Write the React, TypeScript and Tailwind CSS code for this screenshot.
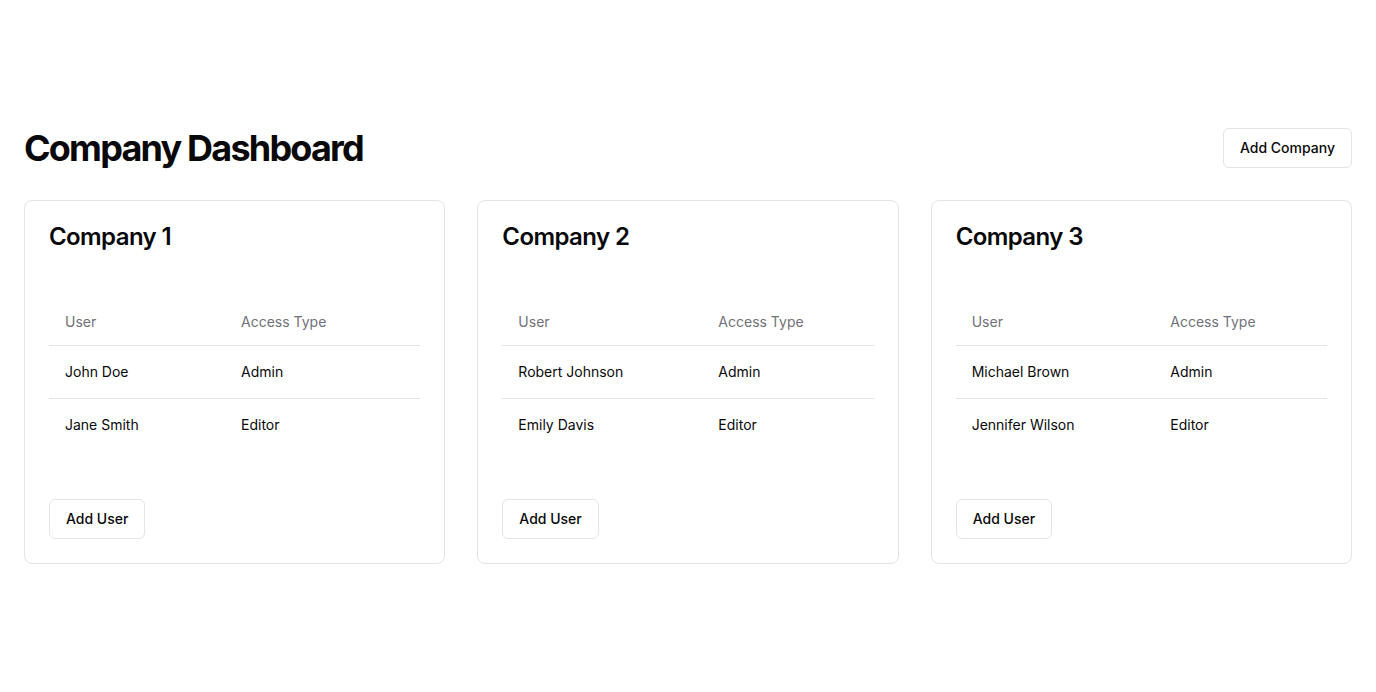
import React from 'react';

const companies = [
  { name: 'Company 1', users: [{ name: 'John Doe', access: 'Admin' }, { name: 'Jane Smith', access: 'Editor' }] },
  { name: 'Company 2', users: [{ name: 'Robert Johnson', access: 'Admin' }, { name: 'Emily Davis', access: 'Editor' }] },
  { name: 'Company 3', users: [{ name: 'Michael Brown', access: 'Admin' }, { name: 'Jennifer Wilson', access: 'Editor' }] },
];

const OutlineButton = ({ children }: { children: React.ReactNode }) => (
  <button className="inline-flex h-10 items-center justify-center rounded-md border border-[#e4e4e7] bg-white px-4 text-sm font-medium text-[#09090b]">
    {children}
  </button>
);

const App = () => {
  return (
    <div className="flex min-h-screen items-center bg-white px-6 text-[#09090b]" style={{ fontFamily: 'Inter, "Noto Sans", sans-serif' }}>
      <div className="w-full">
        {/* Header */}
        <div className="mb-8 flex items-center justify-between">
          <h1 className="text-4xl font-bold tracking-tighter">Company Dashboard</h1>
          <OutlineButton>Add Company</OutlineButton>
        </div>

        {/* Cards */}
        <div className="grid grid-cols-3 gap-8">
          {companies.map((company) => (
            <div key={company.name} className="rounded-lg border border-[#e4e4e7] bg-white p-6">
              <h3 className="text-2xl leading-none font-semibold tracking-tight">{company.name}</h3>
              <table className="mt-[49px] w-full text-sm">
                <thead>
                  <tr className="border-b border-[#e4e4e7]">
                    <th className="h-12 px-4 text-left align-middle font-normal text-[#71717a]">User</th>
                    <th className="h-12 px-4 text-left align-middle font-normal text-[#71717a]">Access Type</th>
                  </tr>
                </thead>
                <tbody>
                  {company.users.map((user, i) => (
                    <tr key={user.name} className={i < company.users.length - 1 ? 'border-b border-[#e4e4e7]' : ''}>
                      <td className="p-4 align-middle">{user.name}</td>
                      <td className="p-4 align-middle">{user.access}</td>
                    </tr>
                  ))}
                </tbody>
              </table>
              <div className="mt-12">
                <OutlineButton>Add User</OutlineButton>
              </div>
            </div>
          ))}
        </div>
      </div>
    </div>
  );
};

export default App;
